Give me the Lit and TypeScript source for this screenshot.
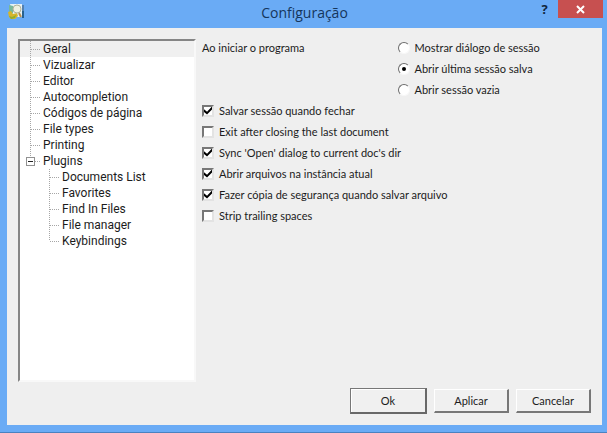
import { LitElement, html, css, svg } from "lit";
import { customElement, property, state } from "lit/decorators.js";

const PAGES = ["Geral", "Vizualizar", "Editor", "Autocompletion", "Códigos de página", "File types", "Printing"];
const PLUGINS = ["Documents List", "Favorites", "Find In Files", "File manager", "Keybindings"];
const SESSION = ["Mostrar diálogo de sessão", "Abrir última sessão salva", "Abrir sessão vazia"];
const OPTIONS: [string, boolean][] = [
  ["Salvar sessão quando fechar", true],
  ["Exit after closing the last document", false],
  ["Sync 'Open' dialog to current doc's dir", true],
  ["Abrir arquivos na instância atual", true],
  ["Fazer cópia de segurança quando salvar arquivo", true],
  ["Strip trailing spaces", false],
];

const appIcon = svg`<svg class="app-icon" viewBox="0 0 18 18" aria-hidden="true">
  <path d="M2 1h12v13H5z" fill="#e6f1f5"/>
  <path d="M1 2l4 1v7H1z" fill="#78b99a"/>
  <path d="M0 9l3-1 2 3 4-1 1 3-3 3H3l-2-2z" fill="#d7b52c"/>
  <path d="M1 13l3 1 4-2-1 3-4 1z" fill="#8fae2e"/>
  <circle cx="9" cy="6" r="4" fill="#eef0e0" stroke="#b0b29a"/>
  <path d="M11 10l2 4" stroke="#b98b4a" stroke-width="2"/>
  <path d="M15 2v6" stroke="#3c566b" stroke-width="1"/>
  <path d="M15 8v7" stroke="#27618f" stroke-width="2"/>
</svg>`;

@customElement("settings-tree")
class SettingsTree extends LitElement {
  @property() selected = "Geral";
  @state() open = true;

  static styles = css`
    :host { display: block; box-sizing: border-box; background: #fff; border: 2px solid; border-color: #858585 #f8f8f8 #f8f8f8 #858585; font: 12px/16px Roboto, "Noto Sans", sans-serif; color: #1c1c1c; }
    ul { list-style: none; margin: 0; padding: 0; }
    .row { display: flex; align-items: center; height: 16px; padding-left: 2px; }
    .row.selected { background: #f0f0f0; }
    .twig, .toggle { flex: none; width: 21px; height: 16px; }
    .twig svg, .toggle svg { display: block; }
    .children .row { padding-left: 21px; }
    button { font: inherit; color: inherit; background: none; border: 0; margin: 0; padding: 0; text-align: left; white-space: nowrap; }
  `;

  row(name: string, last = false) {
    return html`<li role="treeitem" aria-selected=${this.selected === name}>
      <div class="row ${this.selected === name ? "selected" : ""}">
        <span class="twig"><svg width="19" height="16" aria-hidden="true">
          <path d=${last ? "M8.5 0V8" : "M8.5 0V16"} stroke="#a6a6a6" stroke-dasharray="1 1"/>
          <path d="M9 8.5H18" stroke="#a6a6a6" stroke-dasharray="1 1"/>
        </svg></span>
        <button @click=${() => (this.selected = name)}>${name}</button>
      </div>
    </li>`;
  }

  render() {
    return html`<ul role="tree" aria-label="Configuração">
      ${PAGES.map((p) => this.row(p))}
      <li role="treeitem" aria-expanded=${this.open}>
        <div class="row ${this.selected === "Plugins" ? "selected" : ""}">
          <button class="toggle" aria-label="Plugins" @click=${() => (this.open = !this.open)}>
            <svg width="19" height="16" aria-hidden="true">
              <path d="M8.5 0V4M13 8.5H18" stroke="#a6a6a6" stroke-dasharray="1 1"/>
              <rect x="4.5" y="4.5" width="8" height="8" fill="#fff" stroke="#919191"/>
              <path d=${this.open ? "M6 8.5H11" : "M6 8.5H11M8.5 6V11"} stroke="#222"/>
            </svg>
          </button>
          <button @click=${() => (this.selected = "Plugins")}>Plugins</button>
        </div>
        ${this.open
          ? html`<ul class="children" role="group">${PLUGINS.map((p, i) => this.row(p, i === PLUGINS.length - 1))}</ul>`
          : ""}
      </li>
    </ul>`;
  }
}

@customElement("app-root")
class AppRoot extends LitElement {
  static styles = css`
    :host { display: block; }
    .window { box-sizing: border-box; min-height: 100vh; display: flex; flex-direction: column; padding: 0 5px 7px 7px; background: #6aabf5; border-bottom: 1px solid #4a82c0; }
    .titlebar { display: grid; grid-template-columns: 72px 1fr 72px; height: 28px; }
    .app-icon { width: 18px; height: 18px; margin: 3px 0 0 1px; }
    h1 { margin: 0; text-align: center; font: 14px/26px "Open Sans", "Noto Sans", sans-serif; color: #15365c; }
    .controls { display: flex; align-items: flex-start; justify-content: flex-end; gap: 3px; margin-right: -1px; }
    .controls button { border: 0; padding: 0; height: 18px; }
    .help { width: 21px; background: none; color: #10253c; font: bold 13px/16px "Open Sans", sans-serif; }
    .close { width: 45px; background: #c75050; }
    .close svg { display: block; margin: 0 auto; }
    .client { flex: 1; display: flex; flex-direction: column; padding: 10px 11px 11px; background: #efefef; font: 11px/20px Lato, "Liberation Sans", sans-serif; color: #1c1c1c; }
    .body { flex: 1; display: flex; gap: 6px; }
    settings-tree { flex: none; width: 178px; margin-top: 1px; }
    .panel { flex: 1; min-width: 0; }
    .start { display: grid; grid-template-columns: 1fr 1fr; column-gap: 2px; }
    .choice { display: flex; align-items: center; height: 21px; white-space: nowrap; }
    .start .choice:first-child { height: 20px; }
    input { appearance: none; flex: none; box-sizing: border-box; width: 12px; height: 12px; margin: 0 5px 0 0; background: #fff; border: 2px solid; border-color: #777 #e3e3e3 #e3e3e3 #777; display: grid; place-content: center; }
    input[type="radio"] { border-radius: 50%; border-width: 1px; border-color: #6c6c6c #f8f8f8 #f8f8f8 #6c6c6c; }
    input[type="radio"]:checked::before { content: ""; width: 4px; height: 4px; border-radius: 50%; background: #000; }
    input[type="checkbox"]:checked::before { content: ""; width: 8px; height: 8px; background: #000; clip-path: polygon(0 35%, 38% 65%, 100% 0, 100% 38%, 38% 100%, 0 70%); }
    .actions { display: flex; align-items: center; justify-content: flex-end; gap: 7px; margin-top: 6px; }
    .actions button { box-sizing: border-box; width: 75px; height: 24px; padding: 0; font: inherit; line-height: 16px; color: inherit; background: #f0f0f0; border: 2px solid; border-width: 1px 2px 2px 1px; border-color: #fff #777 #777 #fff; }
    .actions .default { width: 77px; height: 26px; border-color: #777 #686868 #686868 #777; box-shadow: inset 1px 1px #fff; }
  `;

  render() {
    return html`<div class="window">
      <header class="titlebar">
        ${appIcon}
        <h1>Configuração</h1>
        <div class="controls">
          <button class="help">?</button>
          <button class="close" aria-label="Fechar"><svg width="9" height="9" aria-hidden="true"><path d="M1 1L8 8M8 1L1 8" stroke="#fff" stroke-width="2"/></svg></button>
        </div>
      </header>
      <main class="client">
        <div class="body">
          <settings-tree></settings-tree>
          <div class="panel">
            <div class="start" role="radiogroup" aria-labelledby="start-label">
              <span id="start-label">Ao iniciar o programa</span>
              <div>
                ${SESSION.map((s, i) => html`<label class="choice"><input type="radio" name="session" .checked=${i === 1}>${s}</label>`)}
              </div>
            </div>
            ${OPTIONS.map(([text, on]) => html`<label class="choice"><input type="checkbox" .checked=${on}>${text}</label>`)}
          </div>
        </div>
        <div class="actions">
          <button class="default">Ok</button>
          <button>Aplicar</button>
          <button>Cancelar</button>
        </div>
      </main>
    </div>`;
  }
}
